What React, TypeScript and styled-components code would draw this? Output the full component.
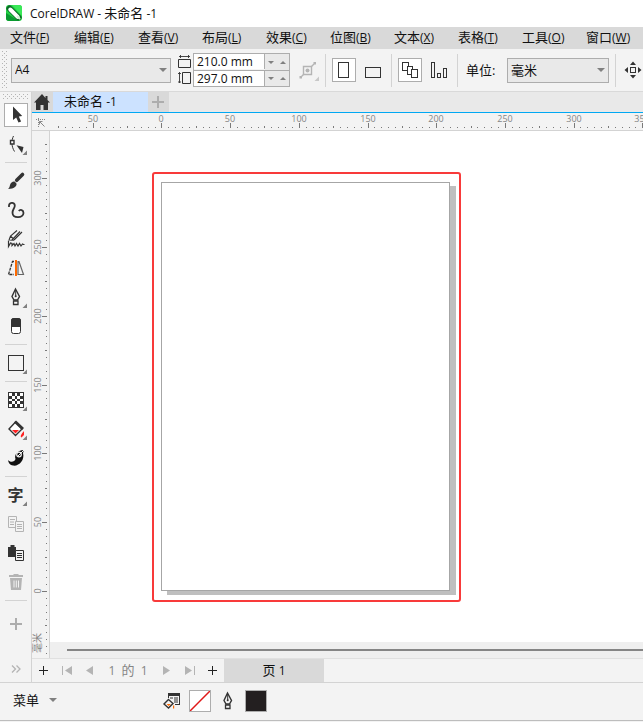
import React, { useLayoutEffect, useRef, useState } from "react";
import styled, { createGlobalStyle, css } from "styled-components";

const INK = "#333333";
const MUTED = "#b4b4b4";

const GlobalStyle = createGlobalStyle`
  * { box-sizing: border-box; }
  body {
    margin: 0;
    background: #f3f3f3;
    color: #111;
    font-family: "Open Sans", "Noto Sans CJK SC", sans-serif;
    font-size: 12px;
    line-height: 16px;
  }
  button, input, select { font: inherit; color: inherit; margin: 0; }
  button { padding: 0; border: 0; background: transparent; }
  svg { display: block; flex: none; }
`;

const Shell = styled.div`
  display: flex;
  flex-direction: column;
  height: 100vh;
  min-height: 640px;
  overflow: hidden;
`;

const TitleBar = styled.header`
  display: flex;
  align-items: center;
  gap: 8px;
  height: 27px;
  padding: 0 6px 1px;
  background: #fff;
  flex: none;
`;

const Title = styled.h1`
  margin: 0;
  font-size: 12px;
  font-weight: 400;
  white-space: pre;
`;

const Han = styled.span`
  font-size: 13px;
`;

const MenuBar = styled.nav`
  display: flex;
  height: 22px;
  padding-left: 10px;
  background: #d9d9d9;
  overflow: hidden;
  flex: none;
`;

const MenuItem = styled.button`
  width: 64px;
  font-size: 13px;
  line-height: 18px;
  height: 20px;
  text-align: left;
  white-space: nowrap;
  flex: none;
`;

const Key = styled.span`
  font-size: 12px;
`;

const PropertyBar = styled.div`
  display: flex;
  align-items: center;
  gap: 6px;
  height: 43px;
  padding-left: 2px;
  border-bottom: 1px solid #d9d9d9;
  overflow: hidden;
  flex: none;
`;

const dots = css`
  background-image: conic-gradient(from 270deg at 1px 1px, #b4b4b4 90deg, transparent 0),
    conic-gradient(from 270deg at 1px 1px, #b4b4b4 90deg, transparent 0);
  background-size: 4px 4px;
  background-position: 0 0, 2px 2px;
`;

const BarGrip = styled.div`
  width: 5px;
  height: 38px;
  margin-right: -2px;
  flex: none;
  ${dots}
`;

const SelectBox = styled.div<{ $width: number }>`
  display: grid;
  align-items: center;
  width: ${(p) => p.$width}px;
  height: 25px;
  border: 1px solid #adadad;
  background: #e9e9e9;
  flex: none;

  & > * { grid-area: 1 / 1; }
  & > svg { justify-self: end; margin-right: 3px; pointer-events: none; }
`;

const Select = styled.select`
  appearance: none;
  width: 100%;
  height: 23px;
  padding: 0 3px;
  border: 0;
  border-radius: 0;
  background: transparent;
`;

const Dimensions = styled.div`
  display: grid;
  grid-template-columns: 16px 97px;
  flex: none;
`;

const DimIcons = styled.div`
  display: flex;
  flex-direction: column;
  gap: 1px;
  padding: 1px 0 0 1px;
`;

const DimFields = styled.div`
  border: 1px solid #adadad;
`;

const DimRow = styled.div`
  display: grid;
  grid-template-columns: 1fr 24px;
  height: 16px;

  & + & { border-top: 1px solid #adadad; }
`;

const DimInput = styled.input`
  width: 100%;
  min-width: 0;
  height: 15px;
  padding: 0 3px;
  border: 0;
  border-right: 1px solid #adadad;
  border-radius: 0;
  background: #fff;
`;

const Spinner = styled.div`
  display: grid;
  grid-template-columns: 1fr 1fr;
  place-items: center;
  background: #e9e9e9;
`;

const Separator = styled.div`
  width: 1px;
  height: 33px;
  background: #d3d3d3;
  flex: none;
`;

const ToolButton = styled.button<{ $active?: boolean }>`
  display: flex;
  align-items: center;
  justify-content: center;
  width: 24px;
  height: 24px;
  flex: none;
  color: ${INK};
  ${(p) => p.$active && css`background: #fff; box-shadow: inset 0 0 0 1px #adadad;`}
`;

const FitButton = styled(ToolButton)`
  width: 23px;
`;

const ButtonPair = styled.div`
  display: flex;
  gap: 5px;
  flex: none;
`;

const UnitGroup = styled.div`
  display: flex;
  align-items: center;
  gap: 6px;
  padding-left: 2px;
  font-size: 13px;
  flex: none;
`;

const UnitLabel = styled.label`
  width: 35px;
  white-space: nowrap;
`;

const Workspace = styled.div`
  display: flex;
  flex: 1;
  min-height: 0;
`;

const Toolbox = styled.aside`
  display: flex;
  flex-direction: column;
  align-items: center;
  gap: 5px;
  width: 32px;
  padding: 2px 0 1px;
  border-right: 1px solid #d3d3d3;
  flex: none;
`;

const ToolGrip = styled.div`
  width: 25px;
  height: 6px;
  margin-bottom: -2px;
  flex: none;
  ${dots}
`;

const ToolDivider = styled.div`
  width: 22px;
  height: 1px;
  margin: 1px 0;
  background: #d3d3d3;
  flex: none;
`;

const Spacer = styled.div`
  flex: 1;
`;

const AddTool = styled(ToolButton)`
  margin-top: 5px;
`;

const TextGlyph = styled.span`
  display: grid;
  place-items: center;
  font-size: 16px;
  font-weight: 700;
  line-height: 22px;

  & > * { grid-area: 1 / 1; }
`;

const Document = styled.main`
  display: flex;
  flex-direction: column;
  flex: 1;
  min-width: 0;
`;

const Tabs = styled.div`
  display: flex;
  height: 21px;
  background: #e9e9e9;
  border-bottom: 1px solid #00a8f3;
  flex: none;
`;

const TabIcon = styled.button`
  display: flex;
  align-items: center;
  justify-content: center;
  width: 21px;
  height: 20px;
  padding-right: 1px;
  background: #d9d9d9;
`;

const DocTab = styled.button`
  width: 95px;
  height: 20px;
  padding: 0 11px 2px;
  background: #cce2ff;
  text-align: left;
  white-space: nowrap;
`;

const RulerRow = styled.div`
  display: flex;
  height: 18px;
  border-bottom: 1px solid #d3d3d3;
  flex: none;
`;

const RulerCorner = styled.div`
  width: 18px;
  padding: 5px 4px;
  flex: none;
`;

const HRulerBox = styled.div`
  flex: 1;
  min-width: 0;
  overflow: hidden;
`;

const CanvasRow = styled.div`
  display: flex;
  flex: 1;
  min-height: 0;
`;

const VRulerBox = styled.div`
  width: 18px;
  border-right: 1px solid #d3d3d3;
  overflow: hidden;
  flex: none;
`;

const RulerText = styled.text`
  font-family: "Open Sans", "Noto Sans CJK SC", sans-serif;
  font-size: 9px;
  fill: #858585;
  text-anchor: middle;
`;

const UnitText = styled(RulerText)`
  font-size: 10px;
  text-anchor: start;
`;

const Viewport = styled.div`
  display: flex;
  flex-direction: column;
  flex: 1;
  min-width: 0;
`;

const Canvas = styled.section`
  position: relative;
  flex: 1;
  min-height: 0;
  overflow: hidden;
  background: #fff;
`;

const Frame = styled.div`
  position: absolute;
  left: 102px;
  top: 41px;
  padding: 8px 9px 9px 7px;
  border: 2px solid #f83a3a;
  border-radius: 3px;
`;

const Paper = styled.div`
  width: 289px;
  height: 409px;
  border: 1px solid #a6a6a6;
  background: #fff;
  box-shadow: 6px 4px 0 #bfbfbf;
`;

const ScrollTrack = styled.div`
  display: flex;
  align-items: center;
  height: 16px;
  padding-left: 17px;
  background: #efefef;
  flex: none;
`;

const ScrollThumb = styled.div`
  flex: 1;
  height: 2px;
  background: #858585;
`;

const PageNav = styled.nav`
  display: flex;
  height: 24px;
  border-top: 1px solid #e0e0e0;
  flex: none;
`;

const NavButton = styled.button`
  display: flex;
  align-items: center;
  justify-content: center;
  width: 23px;
  height: 23px;
`;

const PageCount = styled.span`
  width: 54px;
  color: #858585;
  line-height: 22px;
  text-align: center;
  white-space: pre;
`;

const PageTab = styled.button`
  width: 100px;
  height: 23px;
  background: #d9d9d9;
`;

const StatusBar = styled.footer`
  display: flex;
  align-items: center;
  height: 39px;
  padding: 0 0 1px 13px;
  border-top: 1px solid #d3d3d3;
  border-bottom: 1px solid #bdbdbd;
  margin-bottom: 1px;
  flex: none;
`;

const MenuToggle = styled.button`
  display: flex;
  align-items: center;
  gap: 10px;
  width: 147px;
  padding-bottom: 2px;
  font-size: 13px;
`;

const StatusIcon = styled.span`
  display: flex;
  justify-content: center;
  width: 24px;
`;

const Swatch = styled.button<{ $color: string }>`
  width: 22px;
  height: 22px;
  margin: 0 5px;
  border: 1px solid #adadad;
  background: ${(p) => p.$color};
`;

const Icon = ({ children, size = 24 }: { children: React.ReactNode; size?: number }) => (
  <svg width={size} height={size} viewBox={`0 0 ${size} ${size}`} fill="none" stroke={INK} aria-hidden="true">
    {children}
  </svg>
);

const Flyout = ({ color = "#808080" }: { color?: string }) => (
  <path d="M23 18.500v4.500h-4.500z" fill={color} stroke="none" />
);

const Triangle = ({ up = false, w = 8, color = "#808080" }: { up?: boolean; w?: number; color?: string }) => (
  <svg width={w} height={w / 2} viewBox="0 0 8 4" aria-hidden="true">
    <path d={up ? "M0 4h8L4 0z" : "M0 0h8L4 4z"} fill={color} />
  </svg>
);

const Plus = ({ size, color, weight = 1 }: { size: number; color: string; weight?: number }) => (
  <svg width={size} height={size} viewBox={`0 0 ${size} ${size}`} aria-hidden="true" shapeRendering="crispEdges">
    <path d={`M0 ${size / 2}H${size}M${size / 2} 0V${size}`} stroke={color} strokeWidth={weight} />
  </svg>
);

const NibShape = () => (
  <>
    <path d="M11.5 4L8 11.5l2 3.5h3.5l2-3.5z" strokeWidth="1.4" />
    <path d="M11.7 5v6" />
    <circle cx="11.7" cy="11.3" r="1" fill={INK} stroke="none" />
    <path d="M9.5 16h4.5v3.5H9.5z" strokeWidth="1.3" />
  </>
);

const checkCells = [[5, 3], [8, 3], [11, 2], [13, 3], [16, 3]];
const checks = checkCells
  .flatMap(([y, h], r) =>
    checkCells.filter((_, c) => (r + c) % 2 === 0).map(([x, w]) => `M${x} ${y}h${w}v${h}h-${w}z`),
  )
  .join("");

type Tool = { name: string; icon: React.ReactNode; active?: boolean; label?: string };

const tools: (Tool | null)[] = [
  { name: "选择", active: true, icon: <path d="M9 3.5V17l3.2-2.6 2.3 5.2 2.6-1.2-2.3-4.8 3.4-.5z" fill={INK} stroke="none" /> },
  {
    name: "形状",
    icon: (
      <>
        <path d="M9.5 4C7.5 8 7 14 10.5 19.5" />
        <path d="M6.5 8.5h3.5v3.5H6.5z" fill="#fff" strokeWidth="1.4" />
        <path d="M12.5 13.3l7 1.7-1.5 6z" fill={INK} stroke="none" />
        <Flyout />
      </>
    ),
  },
  null,
  {
    name: "艺术笔",
    icon: (
      <>
        <path d="M18.5 5.5L12.7 11.3" strokeWidth="3.6" strokeLinecap="round" />
        <path d="M4 20c2.600-1.600 1-4.300 3.600-6.500 1-.9 2.400-1.200 3.200-.8l1.500 1.600c.6 1 .2 2.200-.8 3.300C9.600 19.600 7 20 4 20z" fill={INK} stroke="none" />
      </>
    ),
  },
  {
    name: "手绘",
    icon: <path d="M5 9c-.6-5 6-5.500 5.800-1.300-.1 2.600-2.600 4-2.300 7.300.4 5.800 11 5.200 11 0 0-3.200-3.300-4-4.700-2" strokeWidth="1.8" />,
  },
  {
    name: "智能绘图",
    icon: (
      <>
        <path d="M5 13l1.500-4L13 3.500M7.500 13.500L16 4.500M10 13l8-8M5 13l5 .2M6.500 9l2.500 2.500" strokeWidth="1.100" />
        <path d="M4.500 13.500v6l2-3.500 1.500.5v2l2-2 1 2.500 1.500-2.500 1.500 2.500 1.500-2.500 1.500 2.500 1.500-2 1 .5h1" strokeWidth="1.200" />
      </>
    ),
  },
  {
    name: "对称",
    icon: (
      <>
        <path d="M10 5.500H8.500L4.500 18.500H10" strokeWidth="1.300" strokeDasharray="3 1" />
        <path d="M14 5.500h1l4.500 13H14z" stroke="#666" strokeWidth="1.200" />
        <path d="M12 4v16" stroke="#ff6a00" strokeWidth="2" />
      </>
    ),
  },
  { name: "钢笔", icon: <><NibShape /><Flyout /></> },
  {
    name: "橡皮擦",
    icon: (
      <>
        <rect x="7.500" y="4.500" width="9" height="15" rx="2" fill="#fff" />
        <path d="M7 13V7c0-2 1-3 3-3h4c2 0 3 1 3 3v6z" fill={INK} stroke="none" />
      </>
    ),
  },
  null,
  { name: "矩形", icon: <><rect x="4.500" y="4.500" width="15" height="15" /><Flyout /></> },
  null,
  {
    name: "透明度",
    icon: (
      <>
        <rect x="4" y="4" width="16" height="16" fill={INK} stroke="none" />
        <path d={checks} fill="#fff" stroke="none" shapeRendering="crispEdges" />
        <Flyout />
      </>
    ),
  },
  {
    name: "填充",
    icon: (
      <>
        <path d="M11.500 5L5 12l6.500 6.500L18 12z" fill="#fff" strokeWidth="1.400" />
        <path d="M11 4.500l8 7.500" strokeWidth="3" />
        <path d="M8 13h7l-3.500 3.500z" fill="#f22" stroke="none" />
        <path d="M20 14v4l-2.500 2.500c-2-1.500.5-4 2.500-6.500z" fill="#f22" stroke="none" />
        <Flyout />
      </>
    ),
  },
  {
    name: "涂抹",
    icon: (
      <>
        <path d="M4 14c2 2.500 6.500 2.500 7.500-1C10 9 13 4.500 20 4l-1 3c2 7-4 13.500-10 12.600-3-.5-4.700-2.600-5-5.600z" fill="#111" stroke="none" />
        <circle cx="15" cy="8.500" r="2.300" stroke="#f3f3f3" strokeWidth="1.200" />
        <path d="M20 4l-6.500 6.500" stroke="#f3f3f3" />
      </>
    ),
  },
  null,
  { name: "文本", label: "字", icon: <Flyout /> },
  {
    name: "复制属性",
    icon: (
      <g stroke={MUTED}>
        <path d="M11 15.500H4.500v-11h8V9M6 7.500h5M6 10h4M6 12.500h4" />
        <path d="M11.500 9.500h8v10h-8zM13 12.500h5M13 14.500h5M13 16.500h5" />
      </g>
    ),
  },
  {
    name: "粘贴",
    icon: (
      <>
        <path d="M4 6h2.500V4h4v2H12v10H4z" fill={INK} stroke="none" />
        <path d="M11.500 9.500h8v10h-8z" fill="#f3f3f3" />
        <path d="M13 12.500h5M13 14.500h5M13 16.500h5" />
      </>
    ),
  },
  {
    name: "删除",
    icon: (
      <>
        <path d="M5 5h4.500V4h5v1H19v2H5zM6 8h12l-1 12H7z" fill={MUTED} stroke="none" />
        <path d="M10 10.500v7M12.300 10.500v7M14.500 10.500v7" stroke="#f3f3f3" />
      </>
    ),
  },
  null,
];

const menus = [
  ["文件", "F"], ["编辑", "E"], ["查看", "V"], ["布局", "L"], ["效果", "C"],
  ["位图", "B"], ["文本", "X"], ["表格", "T"], ["工具", "O"], ["窗口", "W"],
];

const H_STEP = 6.87;
const V_STEP = 6.88;
const tickX = (i: number) => Math.round(111.4 + i * H_STEP);
const tickY = (i: number) => Math.round(460 - i * V_STEP);
const tickLength = (i: number) => (i % 10 === 0 ? 5 : i % 5 === 0 ? 2 : 1);

const HRuler = () => {
  const box = useRef<HTMLDivElement>(null);
  const [width, setWidth] = useState(600);

  useLayoutEffect(() => {
    const el = box.current;
    if (!el) return;
    const measure = () => setWidth(el.clientWidth);
    measure();
    const observer = new ResizeObserver(measure);
    observer.observe(el);
    return () => observer.disconnect();
  }, []);

  const ticks: number[] = [];
  for (let i = -15; tickX(i) < width; i++) ticks.push(i);

  return (
    <HRulerBox ref={box}>
      <svg width="100%" height="17" aria-hidden="true">
        {ticks.map((i) => (
          <rect key={i} x={tickX(i)} y={15 - tickLength(i)} width="1" height={tickLength(i)} fill="#7a7a7a" />
        ))}
        {ticks.filter((i) => i % 10 === 0).map((i) => (
          <RulerText key={i} x={tickX(i)} y="9">{Math.abs(i * 5)}</RulerText>
        ))}
      </svg>
    </HRulerBox>
  );
};

const VRuler = () => {
  const ticks = Array.from({ length: 300 }, (_, n) => 65 - n);
  return (
    <VRulerBox>
      <svg width="17" height="100%" aria-hidden="true">
        {ticks.map((i) => (
          <rect key={i} x={15 - tickLength(i)} y={tickY(i)} width={tickLength(i)} height="1" fill="#7a7a7a" />
        ))}
        {ticks.filter((i) => i % 10 === 0 && i >= 0).map((i) => (
          <RulerText key={i} transform={`translate(9 ${tickY(i)}) rotate(-90)`}>{i * 5}</RulerText>
        ))}
        <svg y="100%" overflow="visible">
          <UnitText transform="translate(9 -5) rotate(-90)">毫米</UnitText>
        </svg>
      </svg>
    </VRulerBox>
  );
};

export default function App() {
  return (
    <Shell>
      <GlobalStyle />
      <TitleBar>
        <svg width="16" height="16" viewBox="0 0 16 16" aria-hidden="true">
          <rect width="16" height="16" rx="3" fill="#22d044" />
          <path d="M0 8v5a3 3 0 003 3h10z" fill="#0a9a30" />
          <path d="M6 0h7a3 3 0 013 3v8z" fill="#3ae858" />
          <path d="M3.500 3.500L12.500 12.500" stroke="#0a6a26" strokeWidth="6" strokeLinecap="round" />
          <path d="M4.300 4.500l7.400 7.400" stroke="#fff" strokeWidth="4" strokeLinecap="round" />
          <path d="M11.500 11.500l2 2" stroke="#d4f5d6" strokeWidth="2" strokeLinecap="round" />
        </svg>
        <Title>CorelDRAW - <Han>未命名</Han> -1</Title>
      </TitleBar>

      <MenuBar aria-label="主菜单">
        {menus.map(([name, key]) => (
          <MenuItem key={key}>{name}<Key>(<u>{key}</u>)</Key></MenuItem>
        ))}
      </MenuBar>

      <PropertyBar>
        <BarGrip />
        <SelectBox $width={160}>
          <Select aria-label="页面大小" defaultValue="A4"><option>A4</option></Select>
          <Triangle />
        </SelectBox>
        <Dimensions>
          <DimIcons>
            <Icon size={15}>
              <path d="M.5 5.500h12v8H.5z" /><path d="M1 2.500h11M2.500 1v3M10.500 1v3" strokeWidth=".9" />
            </Icon>
            <Icon size={15}>
              <path d="M4.500 2.500h8v11h-8z" /><path d="M1.500 2v11M0 3.500h3M0 12h3" strokeWidth=".9" />
            </Icon>
          </DimIcons>
          <DimFields>
            {[["宽度", "210.0 mm"], ["高度", "297.0 mm"]].map(([name, value]) => (
              <DimRow key={name}>
                <DimInput aria-label={name} defaultValue={value} />
                <Spinner>
                  <button aria-label={`减小${name}`}><Triangle w={6} /></button>
                  <button aria-label={`增大${name}`}><Triangle w={6} up /></button>
                </Spinner>
              </DimRow>
            ))}
          </DimFields>
        </Dimensions>
        <FitButton aria-label="自动适合页面">
          <Icon>
            <g stroke={MUTED}>
              <path d="M7.500 8.500h8v8h-8z" strokeWidth="1.400" />
              <path d="M15.500 8.500L18 6M7.500 16.500L5 19" strokeWidth="1.400" />
              <path d="M17.500 4h2.500v2.500h-2.500zM3.500 18H6v2.500H3.500z" fill={MUTED} stroke="none" />
              <circle cx="11.500" cy="12.500" r="2" fill={MUTED} stroke="none" />
            </g>
            <Flyout color="#c8c8c8" />
          </Icon>
        </FitButton>
        <Separator />
        <ButtonPair>
          <ToolButton $active aria-label="纵向"><Icon><rect x="6.500" y="4.500" width="10" height="15" /></Icon></ToolButton>
          <ToolButton aria-label="横向"><Icon><rect x="4.500" y="9.500" width="15" height="10" /></Icon></ToolButton>
        </ButtonPair>
        <Separator />
        <ButtonPair>
          <ToolButton $active aria-label="所有页面">
            <Icon>
              <rect x="4.500" y="4.500" width="6" height="8" />
              <rect x="9.500" y="8.500" width="5" height="8" fill="#fff" />
              <rect x="13.500" y="11.500" width="6" height="8" fill="#fff" />
            </Icon>
          </ToolButton>
          <ToolButton aria-label="当前页面">
            <Icon>
              <rect x="4.500" y="4.500" width="3" height="15" />
              <rect x="10.500" y="15.500" width="3" height="4" />
              <rect x="16.500" y="10.500" width="3" height="9" />
            </Icon>
          </ToolButton>
        </ButtonPair>
        <Separator />
        <UnitGroup>
          <UnitLabel htmlFor="unit">单位:</UnitLabel>
          <SelectBox $width={102}>
            <Select id="unit" defaultValue="毫米"><option>毫米</option></Select>
            <Triangle />
          </SelectBox>
          <Separator />
          <ToolButton aria-label="微调距离">
            <Icon>
              <rect x="8.500" y="9.500" width="5" height="5" />
              <path d="M8 7h6l-3-3.500zM8 17h6l-3 3.500zM6 9v6l-3.500-3zM16 9v6l3.500-3z" fill={INK} stroke="none" />
            </Icon>
          </ToolButton>
        </UnitGroup>
      </PropertyBar>

      <Workspace>
        <Toolbox aria-label="工具箱">
          <ToolGrip />
          {tools.map((tool, i) =>
            tool === null ? (
              <ToolDivider key={i} />
            ) : (
              <ToolButton key={i} $active={tool.active} aria-label={tool.name}>
                {tool.label ? (
                  <TextGlyph><span>{tool.label}</span><Icon>{tool.icon}</Icon></TextGlyph>
                ) : (
                  <Icon>{tool.icon}</Icon>
                )}
              </ToolButton>
            ),
          )}
          <AddTool aria-label="添加工具"><Plus size={12} color="#adadad" weight={2} /></AddTool>
          <Spacer />
          <ToolButton aria-label="更多">
            <Icon><path d="M8 8.500l3.500 3.500L8 15.500M12.500 8.500L16 12l-3.500 3.500" stroke={MUTED} strokeWidth="1.300" /></Icon>
          </ToolButton>
        </Toolbox>

        <Document>
          <Tabs>
            <TabIcon aria-label="主页">
              <svg width="16" height="16" viewBox="0 0 16 16" aria-hidden="true">
                <path d="M8 0L0 8.500h2V16h4.500v-5h3v5H14V8.500h2L13.500 6V2h-2v2z" fill={INK} />
              </svg>
            </TabIcon>
            <DocTab><Han>未命名</Han> -1</DocTab>
            <TabIcon aria-label="新建文档"><Plus size={12} color="#adadad" weight={2} /></TabIcon>
          </Tabs>
          <RulerRow>
            <RulerCorner>
              <svg width="10" height="10" viewBox="0 0 10 10" fill="none" stroke="#888" aria-hidden="true">
                <path d="M0 1.500h10M2.500 0v10" strokeDasharray="1 1" />
                <path d="M3.500 3.500l5 5M3.500 6.500v-3h3" />
              </svg>
            </RulerCorner>
            <HRuler />
          </RulerRow>
          <CanvasRow>
            <VRuler />
            <Viewport>
              <Canvas aria-label="绘图区">
                <Frame><Paper /></Frame>
              </Canvas>
              <ScrollTrack><ScrollThumb /></ScrollTrack>
            </Viewport>
          </CanvasRow>
          <PageNav aria-label="页面导航">
            <NavButton aria-label="在前面添加页面"><Plus size={9} color="#222" /></NavButton>
            <NavButton aria-label="第一页">
              <svg width="10" height="9" viewBox="0 0 10 9" aria-hidden="true"><path d="M0 0h1v9H0zM10 0v9L3 4.500z" fill={MUTED} /></svg>
            </NavButton>
            <NavButton aria-label="上一页">
              <svg width="7" height="9" viewBox="0 0 7 9" aria-hidden="true"><path d="M7 0v9L0 4.500z" fill={MUTED} /></svg>
            </NavButton>
            <PageCount>1  <Han>的</Han>  1</PageCount>
            <NavButton aria-label="下一页">
              <svg width="7" height="9" viewBox="0 0 7 9" aria-hidden="true"><path d="M0 0v9l7-4.500z" fill={MUTED} /></svg>
            </NavButton>
            <NavButton aria-label="最后一页">
              <svg width="10" height="9" viewBox="0 0 10 9" aria-hidden="true"><path d="M9 0h1v9H9zM0 0v9l7-4.500z" fill={MUTED} /></svg>
            </NavButton>
            <NavButton aria-label="在后面添加页面"><Plus size={9} color="#222" /></NavButton>
            <PageTab><Han>页</Han> 1</PageTab>
          </PageNav>
        </Document>
      </Workspace>

      <StatusBar>
        <MenuToggle>菜单<Triangle /></MenuToggle>
        <StatusIcon>
          <Icon>
            <path d="M8 4h12v12h-5v-1h4V7H9v2H8z" fill={INK} stroke="none" />
            <path d="M8 4h12v3H8zM10 8.500h3v1h-3zM14 8.500h4v1h-4zM14 10.500h4v1h-4zM14 12.500h4v1h-4z" fill={INK} stroke="none" />
            <path d="M8.500 10.500l4.500 4-4.500 4.500L4 15z" fill="#f3f3f3" strokeWidth="1.400" />
            <path d="M6.500 15h4.500l-2.300 2zM13 16.500h1.200v3H13z" fill="#ff6a00" stroke="none" />
          </Icon>
        </StatusIcon>
        <Swatch $color="#fff" aria-label="无填充">
          <svg width="20" height="20" viewBox="0 0 20 20" aria-hidden="true"><path d="M0 20L20 0" stroke="#e01818" strokeWidth="1.500" /></svg>
        </Swatch>
        <StatusIcon><Icon><NibShape /></Icon></StatusIcon>
        <Swatch $color="#231f20" aria-label="轮廓颜色" />
      </StatusBar>
    </Shell>
  );
}
